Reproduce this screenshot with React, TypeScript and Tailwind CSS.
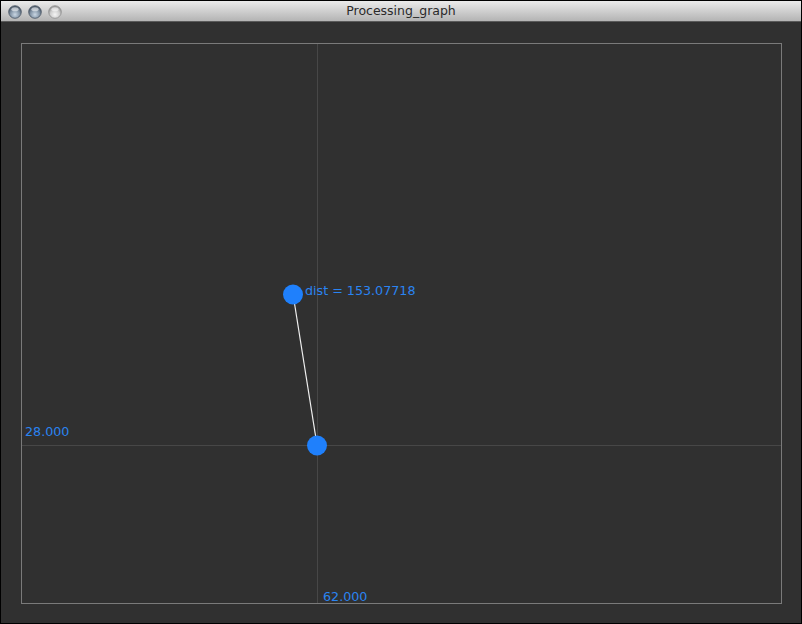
import React from 'react';

const font = { fontFamily: '"DejaVu Sans", "Liberation Sans", sans-serif' };

function Light({ active }: { active: boolean }) {
  const id = active ? 'lightOn' : 'lightOff';
  return (
    <svg width="14" height="14" viewBox="0 0 14 14">
      <defs>
        <radialGradient id={id} cx="50%" cy="70%" r="60%">
          <stop offset="0%" stopColor={active ? '#c9d6e3' : '#f4f4f4'} />
          <stop offset="60%" stopColor={active ? '#8596a8' : '#cfcfcf'} />
          <stop offset="100%" stopColor={active ? '#4f5d6c' : '#9a9a9a'} />
        </radialGradient>
      </defs>
      <circle cx="7" cy="7" r="6.3" fill={`url(#${id})`} stroke={active ? '#4a5563' : '#8f8f8f'} strokeWidth="0.8" />
      <ellipse cx="7" cy="4.2" rx="3.6" ry="2" fill="#ffffff" opacity="0.55" />
    </svg>
  );
}

export default function App() {
  return (
    <div className="w-[802px] h-[624px] border border-black bg-black flex flex-col" style={font}>
      <div className="relative h-[21px] shrink-0 bg-gradient-to-b from-[#ebebeb] to-[#b4b4b4] border-b border-[#5a5a5a] flex items-center">
        <div className="flex items-center gap-[6px] pl-[7px] pt-[1px]">
          <Light active />
          <Light active />
          <Light active={false} />
        </div>
        <div className="absolute inset-0 flex items-center justify-center text-[12.5px] text-[#2a2a2a]">Processing_graph</div>
      </div>
      <div className="relative flex-1 bg-[#303030]">
        <svg className="absolute inset-0" width="800" height="601" viewBox="1 22 800 601">
          <line x1="317.5" y1="44" x2="317.5" y2="603" stroke="#474747" strokeWidth="1" />
          <line x1="22" y1="445.5" x2="781" y2="445.5" stroke="#474747" strokeWidth="1" />
          <rect x="21.5" y="43.5" width="760" height="560" fill="none" stroke="#7a7a7a" strokeWidth="1" />
          <line x1="293" y1="294" x2="317" y2="445" stroke="#f0f0f0" strokeWidth="1.2" />
          <circle cx="293" cy="294.5" r="10" fill="#1f80fc" />
          <circle cx="317" cy="445.5" r="10" fill="#1f80fc" />
          <g fill="#2a84f2" fontSize="12.7" style={font}>
            <text x="305" y="295">dist = 153.07718</text>
            <text x="25" y="436">28.000</text>
            <text x="323" y="601">62.000</text>
          </g>
        </svg>
      </div>
    </div>
  );
}
